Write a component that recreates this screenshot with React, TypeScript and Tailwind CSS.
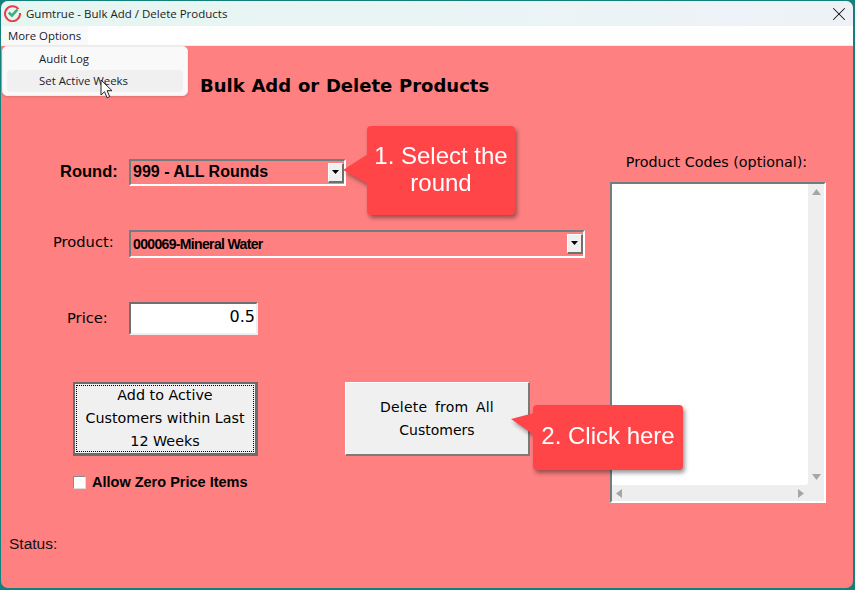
import React from 'react';
import { X } from 'lucide-react';

const comic = "font-['Comic_Sans_MS','DejaVu_Sans',sans-serif]";
const arial = "font-['Liberation_Sans',Arial,sans-serif]";
const segoe = "font-['Open_Sans',sans-serif]";

const DropButton = () => (
  <div className="flex h-[20px] w-[16px] items-center justify-center border-b-2 border-r-2 border-t border-l border-b-[#6f6f6f] border-r-[#6f6f6f] border-t-white border-l-white bg-[#f0f0f0]">
    <svg width="8" height="5" viewBox="0 0 8 5">
      <path d="M0 0h7L3.5 4z" fill="#000" />
    </svg>
  </div>
);

const Combo = ({ text, className, textClass }: { text: string; className: string; textClass: string }) => (
  <div className={`flex items-center justify-between border-b-2 border-r-2 border-l-2 border-t-2 border-b-white border-r-white border-l-[#6f7f7f] border-t-[#6f7f7f] pl-[2px] pr-0 ${className}`}>
    <span className={`${arial} font-bold text-black ${textClass}`}>{text}</span>
    <DropButton />
  </div>
);

const Callout = ({ className, children, tail }: { className: string; children: React.ReactNode; tail: React.ReactNode }) => (
  <div className={`absolute drop-shadow-[2px_3px_2px_rgba(0,0,0,0.4)] ${className}`}>
    {tail}
    <div className={`flex h-full w-full items-center justify-center rounded-[4px] bg-[#ff4547] pb-[4px] text-center text-[24px] leading-[27px] text-white ${arial}`}>
      {children}
    </div>
  </div>
);

const App: React.FC = () => {
  return (
    <div className="h-[590px] w-[855px] overflow-hidden bg-[#14807c] pb-[2px] pl-[1px] pr-[2px] pt-[1px]">
      <div className="relative flex h-full flex-col overflow-hidden rounded-[7px] bg-[#ff8080]">
        {/* Title bar */}
        <div className="flex h-[25px] items-center bg-gradient-to-r from-[#e5f6f1] to-[#eef2f8] pl-[3px] pr-[3px]">
          <svg width="17" height="17" viewBox="0 0 17 17">
            <path d="M14.4 4A7.5 7.5 0 1 0 16 8" fill="none" stroke="#e83e4c" strokeWidth="2" />
            <path d="M4.8 7.5l3.2 3.2 5.4-6.2" fill="none" stroke="#35b27a" strokeWidth="2.6" />
          </svg>
          <span className={`ml-[5px] text-[11.5px] text-[#222] ${segoe}`}>Gumtrue - Bulk Add / Delete Products</span>
          <X className="ml-auto text-[#111]" size={22} strokeWidth={1.1} />
        </div>

        {/* Menu bar */}
        <div className="flex h-[20px] items-center border-b border-[#eeeeee] bg-white">
          <span className={`flex h-[19px] items-center bg-[#f9f9f9] px-[7px] text-[11.4px] text-[#1a1a2e] ${segoe}`}>More Options</span>
        </div>

        {/* Form body */}
        <div className="flex flex-1">
          <div className="flex w-[609px] flex-col">
            <h1 className={`ml-[199px] mt-[26px] h-[28px] whitespace-nowrap text-[18px] font-bold leading-[28px] tracking-[0px] [word-spacing:0.5px] text-black ${comic}`}>
              Bulk Add or Delete Products
            </h1>

            <div className="mt-[59px] flex h-[27px] items-center">
              <span className={`ml-[59px] w-[69px] pb-[3px] text-[16.5px] font-bold text-black ${arial}`}>Round:</span>
              <Combo text="999 - ALL Rounds" className="h-[27px] w-[217px]" textClass="pb-[1px] text-[16px]" />
            </div>

            <div className="mt-[44px] flex h-[28px] items-center">
              <span className={`ml-[52px] w-[76px] pb-[3px] text-[14.7px] text-black ${comic}`}>Product:</span>
              <Combo text="000069-Mineral Water" className="h-[28px] w-[456px]" textClass="text-[14px] tracking-[-0.65px]" />
            </div>

            <div className="mt-[44px] flex h-[33px] items-center">
              <span className={`ml-[66px] w-[62px] text-[14.7px] text-black ${comic}`}>Price:</span>
              <div className={`flex h-[33px] w-[129px] items-center justify-end border-b-2 border-r-2 border-l-2 border-t-2 border-b-[#eeeeee] border-r-[#eeeeee] border-l-[#6f6f6f] border-t-[#6f6f6f] bg-white pb-[3px] pr-[1px] text-[16px] text-black ${comic}`}>
                0.5
              </div>
            </div>

            <div className="mt-[47px] flex">
              <button className={`ml-[72px] flex h-[74px] w-[185px] border-2 border-b-[3px] border-r-[3px] border-[#6b6b6b] bg-[#f0f0f0] p-[1px] text-[14.3px] leading-[23px] text-black ${comic}`}>
                <span className="flex h-full w-full items-center justify-center border border-dotted border-black">
                  Add to Active<br />Customers within Last<br />12 Weeks
                </span>
              </button>
              <button className={`ml-[87px] flex h-[74px] w-[185px] items-center justify-center border border-b-2 border-r-2 border-t-white border-l-white border-b-[#7a7a7a] border-r-[#7a7a7a] bg-[#f0f0f0] text-[14px] leading-[23px] text-black ${comic}`}>
                <span>
                  <span className="[word-spacing:3px] tracking-[0.2px]">Delete from All</span>
                  <br />
                  Customers
                </span>
              </button>
            </div>

            <div className="ml-[72px] mt-[19px] flex h-[15px] items-center">
              <span className="h-[13px] w-[13px] border border-[#dddddd] border-l-[#8a8a8a] border-t-[#8a8a8a] bg-white" />
              <span className={`ml-[6px] text-[14.5px] font-bold text-black ${arial}`}>Allow Zero Price Items</span>
            </div>

            <div className={`ml-[8px] mt-[45px] text-[15.5px] leading-[18px] text-[#111] ${arial}`}>Status:</div>
          </div>

          <div className="flex w-[216px] flex-col">
            <div className={`mt-[106px] h-[30px] pr-[3px] text-center text-[14.3px] leading-[20px] text-black ${comic}`}>Product Codes (optional):</div>
            <div className="grid h-[321px] w-[216px] grid-cols-[1fr_16px] grid-rows-[1fr_16px] border-b-2 border-r-2 border-l-2 border-t-2 border-b-white border-r-white border-l-[#6f7f7f] border-t-[#6f7f7f] bg-[#eeeeee]">
              <div className="rounded-br-[3px] bg-white" />
              <div className="flex flex-col items-center justify-between py-[5px]">
                <svg width="9" height="6" viewBox="0 0 9 6"><path d="M4.5 0L9 6H0z" fill="#a6a6a6" /></svg>
                <svg width="9" height="6" viewBox="0 0 9 6"><path d="M0 0h9L4.5 6z" fill="#a6a6a6" /></svg>
              </div>
              <div className="flex items-center justify-between px-[4px]">
                <svg width="6" height="9" viewBox="0 0 6 9"><path d="M6 0v9L0 4.5z" fill="#a6a6a6" /></svg>
                <svg width="6" height="9" viewBox="0 0 6 9"><path d="M0 0v9l6-4.5z" fill="#a6a6a6" /></svg>
              </div>
              <div />
            </div>
          </div>
        </div>

        {/* Dropdown menu */}
        <div className={`absolute left-[1px] top-[45px] h-[50px] w-[186px] rounded-[5px] border border-[#eeeeee] bg-[#f9f9f9] px-[4px] pt-[2px] text-[11.4px] text-[#1a1a2e] shadow-sm ${segoe}`}>
          <div className="flex h-[21px] items-center pb-[1px] pl-[32px]">Audit Log</div>
          <div className="flex h-[22px] items-center rounded-[4px] bg-[#f0f0f0] pl-[32px]">Set Active Weeks</div>
        </div>

        {/* Mouse cursor */}
        <svg className="absolute left-[99px] top-[78px]" width="14" height="20" viewBox="0 0 14 20">
          <path d="M1 1v15l3.5-3.3 2.6 6 2.6-1.1-2.6-5.9H12z" fill="#fff" stroke="#222" strokeWidth="1" />
        </svg>

        {/* Callouts */}
        <Callout
          className="left-[366px] top-[125px] h-[89px] w-[148px]"
          tail={<svg className="absolute left-[-24px] top-[28px]" width="25" height="30" viewBox="0 0 25 30"><path d="M25 0L0 16l25 14z" fill="#ff4547" /></svg>}
        >
          <span>1. Select the<br />round</span>
        </Callout>
        <Callout
          className="left-[532px] top-[404px] h-[65px] w-[150px]"
          tail={<svg className="absolute left-[-22px] top-[8px]" width="23" height="22" viewBox="0 0 23 22"><path d="M23 0L0 6l23 16z" fill="#ff4547" /></svg>}
        >
          <span>2. Click here</span>
        </Callout>
      </div>
    </div>
  );
};

export default App;
